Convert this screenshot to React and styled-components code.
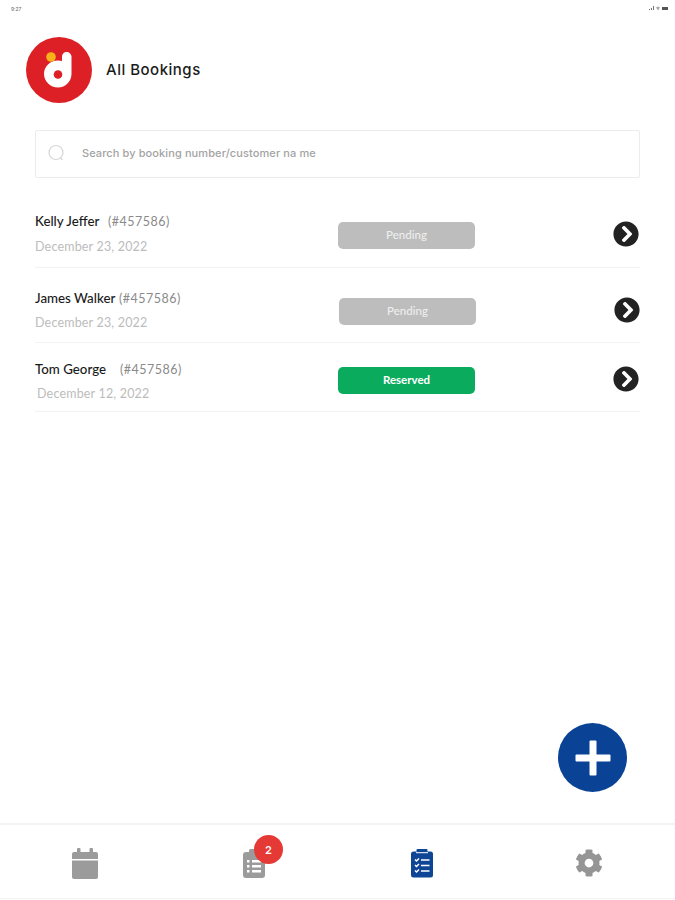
import React from "react";
import styled, { createGlobalStyle } from "styled-components";
import { FaChevronCircleRight, FaCog } from "react-icons/fa";

const Global = createGlobalStyle`
  html, body { margin: 0; padding: 0; background: #fff; }
  * { box-sizing: border-box; }
`;

const Page = styled.div`
  position: relative;
  width: 675px;
  height: 900px;
  display: flex;
  flex-direction: column;
  background: #fff;
  overflow: hidden;
  font-family: Lato, "Liberation Sans", sans-serif;
`;

const StatusBar = styled.div`
  height: 14px;
  padding: 3px 7px 0 11px;
  display: flex;
  justify-content: space-between;
  align-items: center;
  font-family: Inter, sans-serif;
  font-size: 5px;
  color: #666;
`;

const Header = styled.header`
  margin-top: 23px;
  padding-left: 26px;
  display: flex;
  align-items: center;
  gap: 14px;
`;

const Title = styled.h1`
  margin: 0 0 2px;
  font-family: Inter, sans-serif;
  font-size: 15px;
  font-weight: 500;
  letter-spacing: 0.5px;
  color: #1b1b1b;
`;

const Search = styled.div`
  margin: 27px 35px 0;
  height: 48px;
  border: 1px solid #ececec;
  border-radius: 2px;
  padding: 0 0 2px 12px;
  display: flex;
  align-items: center;
  gap: 17px;
`;

const SearchText = styled.span`
  font-family: Inter, sans-serif;
  font-size: 11px;
  font-weight: 500;
  color: #a3a3a3;
  letter-spacing: 0.1px;
`;

const List = styled.main`
  flex: 1;
  margin-top: 28px;
  padding: 0 35px;
`;

const Row = styled.section`
  height: ${(p) => p.$h}px;
  padding-top: ${(p) => p.$top}px;
  padding-right: ${(p) => p.$right}px;
  border-bottom: 1px solid #f2f2f2;
  display: grid;
  grid-template-columns: 303px 137px 1fr auto;
  align-items: start;
`;

const Info = styled.div`
  display: flex;
  flex-direction: column;
  gap: ${(p) => p.$gap}px;
`;

const NameLine = styled.div`
  display: flex;
  align-items: baseline;
  height: 16px;
  line-height: 16px;
`;

const Name = styled.span`
  width: ${(p) => p.$w}px;
  font-size: 13.3px;
  font-weight: 500;
  color: #1a1a1a;
  white-space: nowrap;
`;

const BookingId = styled.span`
  font-size: 12.5px;
  letter-spacing: 0.5px;
  color: #8a8a8a;
  white-space: nowrap;
`;

const DateText = styled.div`
  height: 16px;
  line-height: 16px;
  font-size: 12.5px;
  letter-spacing: 0.18px;
  color: #bcbcbc;
  margin-left: ${(p) => p.$m || 0}px;
`;

const Pill = styled.div`
  grid-column: 2;
  width: 137px;
  height: 27px;
  margin-top: ${(p) => p.$top}px;
  margin-left: ${(p) => p.$left || 0}px;
  padding-bottom: 2px;
  border-radius: 5px;
  background: ${(p) => (p.$reserved ? "#0bab5e" : "#bdbdbd")};
  color: ${(p) => (p.$reserved ? "#fff" : "#eeeeee")};
  font-size: 11.5px;
  font-weight: ${(p) => (p.$reserved ? 700 : 500)};
  display: flex;
  align-items: center;
  justify-content: center;
`;

const Arrow = styled(FaChevronCircleRight)`
  grid-column: 4;
  width: 26px;
  height: 26px;
  margin-top: ${(p) => p.$top}px;
  color: #222;
`;

const Fab = styled.button`
  position: absolute;
  left: 558px;
  top: 723px;
  width: 69px;
  height: 69px;
  border: 0;
  padding: 0;
  border-radius: 50%;
  background: #0a4396;
  display: flex;
  align-items: center;
  justify-content: center;
`;

const Nav = styled.nav`
  height: 76px;
  margin-bottom: 1px;
  padding-top: 4px;
  border-top: 2px solid #f3f3f3;
  border-bottom: 1px solid #f3f3f3;
  display: grid;
  grid-template-columns: 170px 168px 168px 166px;
  align-items: center;
  justify-items: center;
`;

const NavItem = styled.div`
  position: relative;
  display: flex;
  color: ${(p) => (p.$active ? "#0f4595" : "#9b9b9b")};
`;

const Gear = styled(FaCog)`
  width: 28px;
  height: 30px;
  margin-bottom: 2px;
  color: #959595;
`;

const Badge = styled.span`
  position: absolute;
  left: 0;
  top: -14px;
  width: 29px;
  height: 29px;
  margin-left: 11px;
  border-radius: 50%;
  background: #e53935;
  color: #fff;
  font-family: Inter, sans-serif;
  font-size: 11px;
  font-weight: 600;
  display: flex;
  align-items: center;
  justify-content: center;
`;

const Logo = () => (
  <svg width="66" height="66" viewBox="0 0 66 66">
    <circle cx="33" cy="33" r="33" fill="#dd1f26" />
    <path
      fill="#fff"
      d="M36 19.500c0-2.600 2.100-4.500 4.500-4.500s5 1.900 5 4.500V37c0 7.500-6 13.500-13.500 13.500S18 44.500 18 37s6-13.500 14-13.500c1.500 0 2.800.2 4 .6z"
    />
    <circle cx="32" cy="37.500" r="4.300" fill="#dd1f26" />
    <circle cx="25" cy="20" r="4.800" fill="#f7b21a" />
  </svg>
);

const SearchIcon = () => (
  <svg width="17" height="18" viewBox="0 0 17 18" fill="none" stroke="#d6d6d6" strokeWidth="1.200">
    <circle cx="8" cy="8.500" r="7" />
    <path d="M12.500 14l2 2" />
  </svg>
);

const Battery = () => (
  <svg width="19" height="5" viewBox="0 0 19 5" fill="#777">
    <path d="M0 4h1V3H0zM2 4h1V2H2zM4 4h1V0H4z" />
    <path d="M7 1.500l2-1 2 1-2 3z" fill="#aaa" />
    <rect x="13" y="1" width="6" height="3" fill="#555" />
  </svg>
);

const Plus = () => (
  <svg width="36" height="36" viewBox="0 0 36 36" fill="#fff">
    <rect x="14.500" y="0.500" width="7" height="35" rx="1" />
    <rect x="0.500" y="14.500" width="35" height="7" rx="1" />
  </svg>
);

const CalendarIcon = () => (
  <svg width="26" height="32" viewBox="0 0 26 32" fill="currentColor">
    <rect x="5" y="0" width="3.500" height="6" rx="1" />
    <rect x="17.500" y="0" width="3.500" height="6" rx="1" />
    <path d="M2 4h22a2 2 0 0 1 2 2v5H0V6a2 2 0 0 1 2-2z" />
    <path d="M0 12.500h26V29a2 2 0 0 1-2 2H2a2 2 0 0 1-2-2z" />
  </svg>
);

const ListIcon = () => (
  <svg width="22" height="29" viewBox="0 0 22 29" fill="currentColor">
    <path
      fillRule="evenodd"
      d="M3 3h16a3 3 0 0 1 3 3v20a3 3 0 0 1-3 3H3a3 3 0 0 1-3-3V6a3 3 0 0 1 3-3zM4 11v2.500h2.500V11zM9 11v2.500h9V11zM4 16v2.500h2.500V16zM9 16v2.500h9V16zM4 21v2.500h2.500V21zM9 21v2.500h9V21z"
    />
    <rect x="6" y="0" width="10" height="4" rx="1.500" />
  </svg>
);

const ChecklistIcon = () => (
  <svg width="22" height="29" viewBox="0 0 22 29" fill="none">
    <rect x="0" y="2.500" width="22" height="26" rx="2.500" fill="currentColor" />
    <rect x="5.500" y="0" width="11" height="3" rx="1" fill="currentColor" />
    <rect x="5" y="3.200" width="12" height="1" fill="#fff" />
    <g stroke="#fff" strokeWidth="1.500">
      <path d="M4 10.500l1.500 1.500L8 9.500M4 16l1.500 1.500L8 15M4 21.500L5.500 23 8 20.500" />
      <path d="M10 11h8.500M10 16.500h8.500M10 22h8.500" />
    </g>
  </svg>
);

const rows = [
  { name: "Kelly Jeffer", w: 73, date: "December 23, 2022", status: "Pending", h: 62, top: 7, gap: 10, nudge: 9, arrow: 8, right: 1 },
  { name: "James Walker", w: 84, date: "December 23, 2022", status: "Pending", h: 75, top: 22, gap: 9, nudge: 8, left: 1, arrow: 7, right: 0 },
  { name: "Tom George", w: 85, date: "December 12, 2022", status: "Reserved", h: 69, top: 18, gap: 9, nudge: 6, arrow: 5, right: 1, dateShift: 2 },
];

export default function App() {
  return (
    <Page>
      <Global />
      <StatusBar>
        <span>9:27</span>
        <Battery />
      </StatusBar>
      <Header>
        <Logo />
        <Title>All Bookings</Title>
      </Header>
      <Search>
        <SearchIcon />
        <SearchText>Search by booking number/customer na me</SearchText>
      </Search>
      <List>
        {rows.map((r) => (
          <Row key={r.name} $h={r.h} $top={r.top} $right={r.right}>
            <Info $gap={r.gap}>
              <NameLine>
                <Name $w={r.w}>{r.name}</Name>
                <BookingId>(#457586)</BookingId>
              </NameLine>
              <DateText $m={r.dateShift}>{r.date}</DateText>
            </Info>
            <Pill $top={r.nudge} $left={r.left} $reserved={r.status === "Reserved"}>
              {r.status}
            </Pill>
            <Arrow $top={r.arrow} />
          </Row>
        ))}
      </List>
      <Fab aria-label="Add booking">
        <Plus />
      </Fab>
      <Nav>
        <NavItem><CalendarIcon /></NavItem>
        <NavItem>
          <ListIcon />
          <Badge>2</Badge>
        </NavItem>
        <NavItem $active><ChecklistIcon /></NavItem>
        <NavItem><Gear /></NavItem>
      </Nav>
    </Page>
  );
}
